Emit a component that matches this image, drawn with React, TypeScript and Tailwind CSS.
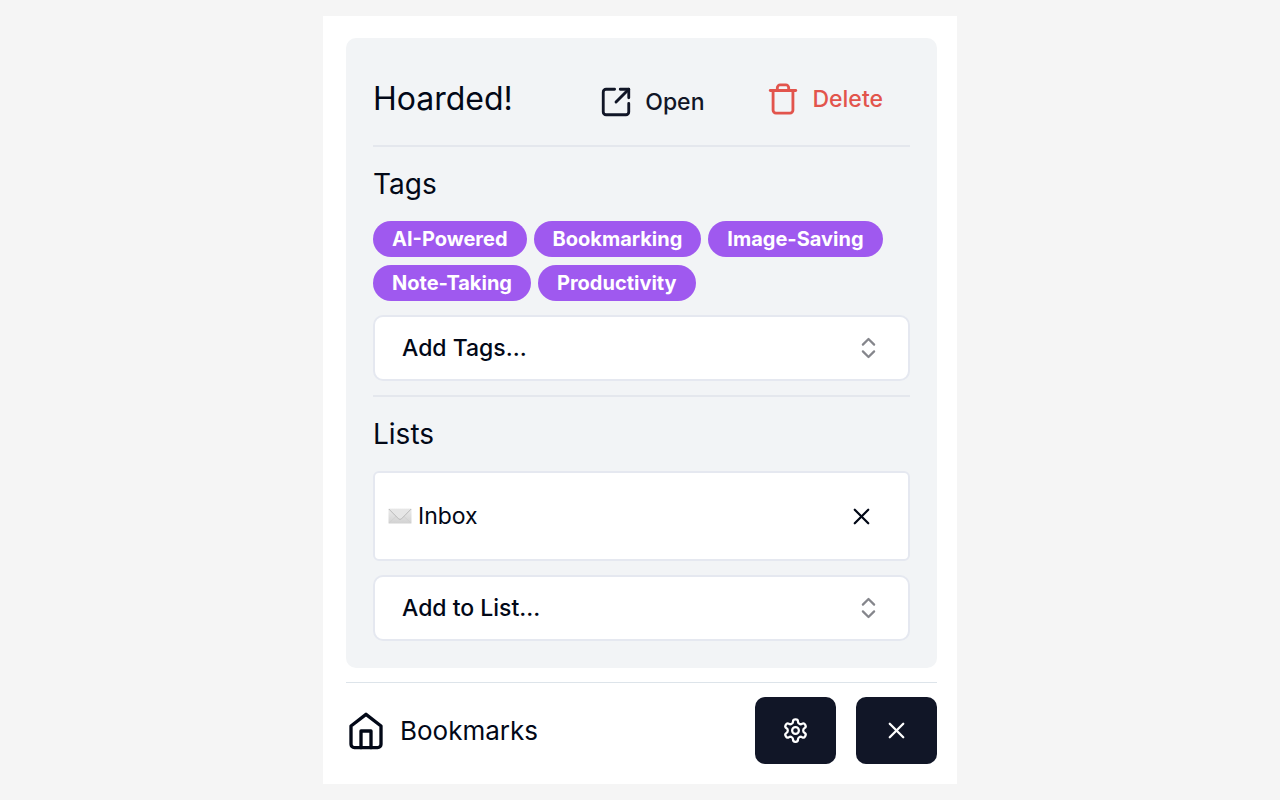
import React from "react";
import { ChevronsUpDown, SquareArrowOutUpRight, X } from "lucide-react";

const tags = ["AI-Powered", "Bookmarking", "Image-Saving", "Note-Taking", "Productivity"];

type IconProps = {
  className?: string;
  children: React.ReactNode;
};

function Icon({ className, children }: IconProps) {
  return (
    <svg viewBox="0 0 24 24" fill="none" stroke="currentColor" strokeWidth={2} strokeLinecap="round" strokeLinejoin="round" className={className} aria-hidden="true">
      {children}
    </svg>
  );
}

function TrashIcon() {
  return (
    <Icon className="size-[34px] shrink-0">
      <path d="M3 6h18" />
      <path d="M19 6v14c0 1-1 2-2 2H7c-1 0-2-1-2-2V6" />
      <path d="M8 6V4c0-1 1-2 2-2h4c1 0 2 1 2 2v2" />
    </Icon>
  );
}

function HomeIcon() {
  return (
    <Icon className="size-10 shrink-0">
      <path d="m3 9 9-7 9 7v11a2 2 0 0 1-2 2H5a2 2 0 0 1-2-2z" />
      <path d="M9 22V12h6v10" />
    </Icon>
  );
}

function SettingsIcon() {
  return (
    <Icon className="size-[27px]">
      <path d="M12.22 2h-.44a2 2 0 0 0-2 2v.18a2 2 0 0 1-1 1.73l-.43.25a2 2 0 0 1-2 0l-.15-.08a2 2 0 0 0-2.73.73l-.22.38a2 2 0 0 0 .73 2.73l.15.1a2 2 0 0 1 1 1.72v.51a2 2 0 0 1-1 1.74l-.15.09a2 2 0 0 0-.73 2.73l.22.38a2 2 0 0 0 2.73.73l.15-.08a2 2 0 0 1 2 0l.43.25a2 2 0 0 1 1 1.73V20a2 2 0 0 0 2 2h.44a2 2 0 0 0 2-2v-.18a2 2 0 0 1 1-1.73l.43-.25a2 2 0 0 1 2 0l.15.08a2 2 0 0 0 2.73-.73l.22-.39a2 2 0 0 0-.73-2.73l-.15-.08a2 2 0 0 1-1-1.74v-.5a2 2 0 0 1 1-1.74l.15-.09a2 2 0 0 0 .73-2.73l-.22-.38a2 2 0 0 0-2.73-.73l-.15.08a2 2 0 0 1-2 0l-.43-.25a2 2 0 0 1-1-1.73V4a2 2 0 0 0-2-2z" />
      <circle cx="12" cy="12" r="3" />
    </Icon>
  );
}

function EnvelopeIcon() {
  return (
    <svg viewBox="0 0 24 16" className="h-4 w-6 shrink-0" aria-hidden="true">
      <defs>
        <linearGradient id="paper" x1="0" y1="0" x2="0" y2="1">
          <stop offset="0" stopColor="#ececec" />
          <stop offset="1" stopColor="#d2d2d2" />
        </linearGradient>
      </defs>
      <rect x="0.5" y="0.5" width="23" height="15" rx="0.5" fill="url(#paper)" />
      <path d="M1 15 8.5 8M23 15l-7.5-7" stroke="#cccccc" strokeWidth="0.6" fill="none" />
      <path d="m0.8 1 9.7 9.8q1.500 1.200 3 0L23.200 1" stroke="#b4b4b4" strokeWidth="0.9" fill="#e6e6e6" />
    </svg>
  );
}

function Separator() {
  return <hr className="h-0.5 border-0 bg-[#e4e7ed]" />;
}

type PickerProps = {
  label: string;
  placeholder: string;
};

function Picker({ label, placeholder }: PickerProps) {
  return (
    <div className="relative">
      <select aria-label={label} className="block h-[66px] w-full appearance-none rounded-[10px] border-2 border-[#e5e8f0] bg-white px-[27px] text-[23px] font-medium">
        <option>{placeholder}</option>
      </select>
      <ChevronsUpDown className="pointer-events-none absolute top-1/2 right-7 size-[27px] -translate-y-1/2 text-[#85868c]" />
    </div>
  );
}

function App() {
  return (
    <div className="flex min-h-screen items-center justify-center bg-[#f5f5f5] font-[Inter,sans-serif] text-[#020817]">
      <main className="flex w-full max-w-[634px] flex-col gap-3.5 bg-white pt-[22px] pr-5 pb-5 pl-[23px]">
        <section className="flex flex-col gap-3.5 rounded-[10px] bg-[#f2f4f6] p-[27px]">
          <header className="flex h-[66px] items-center gap-2 pt-0.5">
            <h1 className="mr-auto text-[32px]">Hoarded!</h1>
            <a href="#open" className="flex items-center gap-3 px-[27px] pt-1.5 text-[23px] font-medium text-[#111627]">
              <SquareArrowOutUpRight className="size-[34px] shrink-0" />
              Open
            </a>
            <button type="button" className="flex items-center gap-3 px-[27px] text-[23px] font-medium text-[#e2544c]">
              <TrashIcon />
              Delete
            </button>
          </header>
          <Separator />
          <h2 className="text-[28px] leading-[46px]">Tags</h2>
          <div className="flex flex-wrap gap-x-[7px] gap-y-2">
            {tags.map((tag) => (
              <span key={tag} className="rounded-full bg-[#9f59ef] px-[19px] text-xl leading-9 font-bold text-white">
                {tag}
              </span>
            ))}
          </div>
          <Picker label="Add tags" placeholder="Add Tags..." />
          <Separator />
          <h2 className="text-[28px] leading-[46px]">Lists</h2>
          <ul>
            <li className="flex h-[90px] items-center rounded-md border-2 border-[#e5e8f0] bg-white px-[13px] text-[23px]">
              <EnvelopeIcon />
              <span className="mr-auto ml-1.5">Inbox</span>
              <button type="button" aria-label="Remove from Inbox" className="px-5">
                <X className="size-[27px]" />
              </button>
            </li>
          </ul>
          <Picker label="Add to list" placeholder="Add to List..." />
        </section>
        <hr className="border-[#dde4ea]" />
        <footer className="flex items-center gap-5">
          <a href="#bookmarks" className="mr-auto flex items-center gap-3.5 text-[26px]">
            <HomeIcon />
            Bookmarks
          </a>
          <button type="button" aria-label="Settings" className="flex h-[67px] w-[81px] items-center justify-center rounded-[10px] bg-[#111627] text-white">
            <SettingsIcon />
          </button>
          <button type="button" aria-label="Close" className="flex h-[67px] w-[81px] items-center justify-center rounded-[10px] bg-[#111627] text-white">
            <X className="size-[27px]" />
          </button>
        </footer>
      </main>
    </div>
  );
}

export default App;
